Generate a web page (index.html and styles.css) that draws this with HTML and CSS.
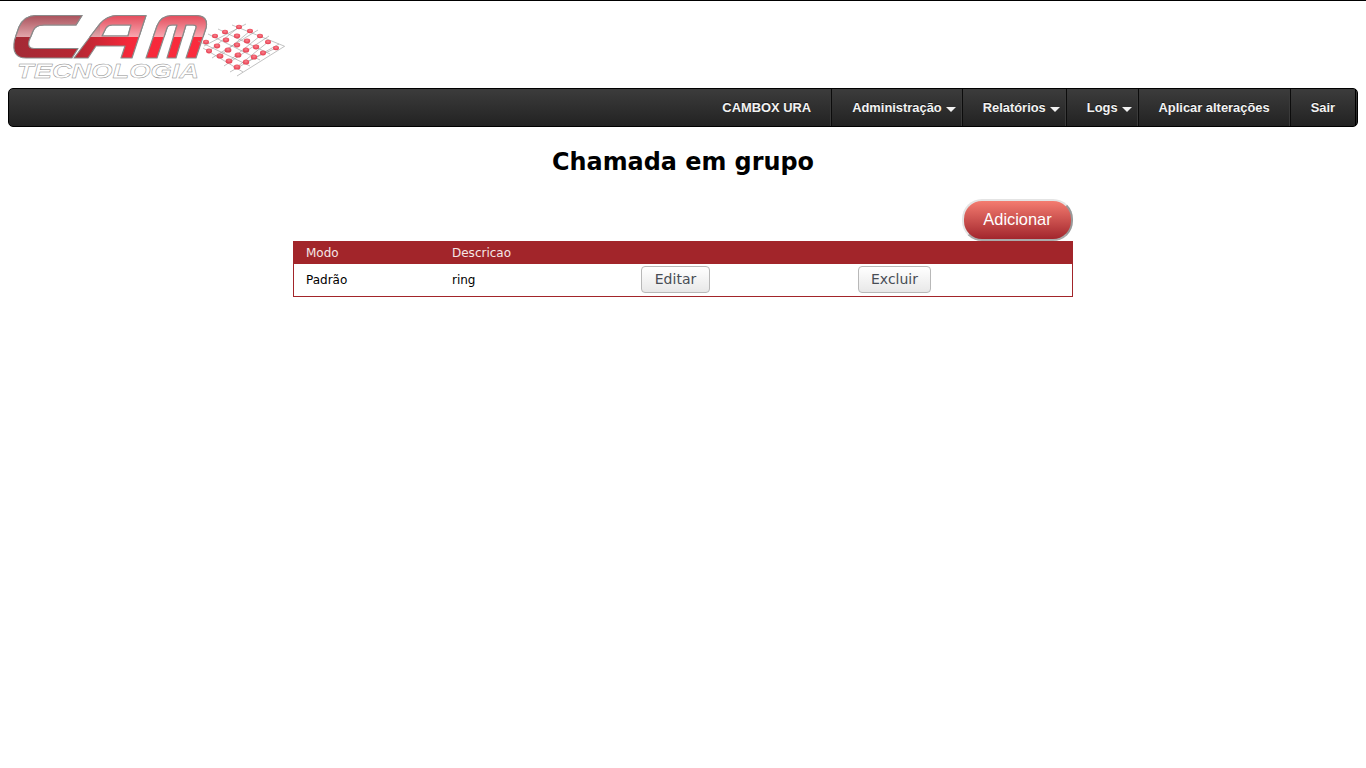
FILE: index.html
```html
<!DOCTYPE html>
<html lang="pt-BR">
<head>
<meta charset="utf-8">
<title>Chamada em grupo</title>
<link rel="stylesheet" href="styles.css">
</head>
<body>
<header class="brand">
<svg class="logo" viewBox="0 1 292 87" role="img" aria-label="CAM Tecnologia">
<defs>
<linearGradient id="lower" gradientUnits="userSpaceOnUse" x1="14" y1="0" x2="205" y2="0">
<stop offset="0" stop-color="#a32a35"/><stop offset=".35" stop-color="#b92733"/><stop offset=".6" stop-color="#f5283a"/><stop offset="1" stop-color="#fb2b3d"/>
</linearGradient>
<linearGradient id="upper" gradientUnits="userSpaceOnUse" x1="0" y1="15" x2="0" y2="37">
<stop offset="0" stop-color="#a8505a"/><stop offset="1" stop-color="#e2a6ab"/>
</linearGradient>
<linearGradient id="upperR" gradientUnits="userSpaceOnUse" x1="0" y1="15" x2="0" y2="37">
<stop offset="0" stop-color="#e34a5a"/><stop offset="1" stop-color="#f8a8b0"/>
</linearGradient>
<clipPath id="shine"><rect x="0" y="0" width="100" height="37"/></clipPath>
<clipPath id="shineR"><rect x="100" y="0" width="120" height="37"/></clipPath>
<radialGradient id="node" cx=".5" cy=".4" r=".6">
<stop offset="0" stop-color="#f8808c"/><stop offset="1" stop-color="#e63a4c"/>
</radialGradient>
<path id="mark" fill-rule="evenodd" d="M82 15.500H36Q24 15.500 19 27L14.500 40Q11 58 26 58H72L78 48.500H34Q27 48.500 29 41L33 31Q35 25 44 25H76ZM74 58L99 25Q106 15.500 118 15.500H146L132 58H121L125 46H96L88 58ZM112 25Q108 25 106 28L102 36H128L131 25ZM146 58L157 26Q161 15.500 172 15.500H195Q209 15.500 206 28L196 58H186L196 28Q197 25 193 25H186L176 58H167L177 25H172Q168 25 167 28L157 58Z"/>
</defs>
<use href="#mark" class="mark-low"/>
<g clip-path="url(#shine)"><use href="#mark" class="mark-hi"/></g>
<g clip-path="url(#shineR)"><use href="#mark" class="mark-hi-r"/></g>
<text x="17" y="78" class="logo-word" textLength="182" lengthAdjust="spacingAndGlyphs">TECNOLOGIA</text>
<path class="net-line" d="M232 25L284 46M218 29L270 54M208 34L260 60M198 41L250 66M203 48L243 72M246 24L204 46M258 30L212 58M269 36L224 66M279 44L230 72M285 46L237 76M239 27L209 51M250 31L220 56M260 36L229 61M268 42L237 67M276 48L246 62"/>
<g class="net-node">
<ellipse cx="239" cy="27" rx="3" ry="2.2"/><ellipse cx="250" cy="31" rx="3" ry="2.2"/><ellipse cx="260" cy="36" rx="3" ry="2.2"/><ellipse cx="268" cy="42" rx="3" ry="2.2"/><ellipse cx="276" cy="48" rx="3" ry="2.2"/>
<ellipse cx="225" cy="32" rx="3" ry="2.2"/><ellipse cx="237" cy="36" rx="3.2" ry="2.4"/><ellipse cx="247" cy="41" rx="3.2" ry="2.4"/><ellipse cx="256" cy="47" rx="3.2" ry="2.4"/><ellipse cx="263" cy="53" rx="3" ry="2.4"/>
<ellipse cx="215" cy="36" rx="3" ry="2.2"/><ellipse cx="226" cy="40" rx="3.2" ry="2.4"/><ellipse cx="237" cy="45" rx="3.2" ry="2.4"/><ellipse cx="246" cy="50" rx="3.2" ry="2.6"/><ellipse cx="254" cy="57" rx="3.2" ry="2.6"/>
<ellipse cx="206" cy="42" rx="3" ry="2.2"/><ellipse cx="217" cy="46" rx="3.2" ry="2.4"/><ellipse cx="228" cy="50" rx="3.4" ry="2.6"/><ellipse cx="238" cy="55" rx="3.4" ry="2.6"/><ellipse cx="246" cy="62" rx="3.2" ry="2.6"/>
<ellipse cx="209" cy="51" rx="3" ry="2.4"/><ellipse cx="220" cy="56" rx="3.4" ry="2.6"/><ellipse cx="229" cy="61" rx="3.4" ry="2.6"/><ellipse cx="237" cy="67" rx="3.4" ry="2.6"/>
</g>
</svg>
</header>
<nav class="navbar">
<ul class="menu">
<li class="menu-item"><a href="#">CAMBOX URA</a></li>
<li class="menu-item has-caret"><a href="#">Administração<span class="caret"></span></a></li>
<li class="menu-item has-caret"><a href="#">Relatórios<span class="caret"></span></a></li>
<li class="menu-item has-caret"><a href="#">Logs<span class="caret"></span></a></li>
<li class="menu-item"><a href="#">Aplicar alterações</a></li>
<li class="menu-item"><a href="#">Sair</a></li>
</ul>
</nav>
<main class="content">
<h1 class="title">Chamada em grupo</h1>
<div class="actions"><button class="btn-add" type="button">Adicionar</button></div>
<table class="grid">
<colgroup><col class="c1"><col class="c2"><col class="c3"><col class="c4"><col></colgroup>
<thead><tr><th>Modo</th><th>Descricao</th><th></th><th></th><th></th></tr></thead>
<tbody><tr><td>Padrão</td><td>ring</td><td class="cell-btn"><button class="btn btn-edit" type="button">Editar</button></td><td class="cell-btn"><button class="btn btn-del" type="button">Excluir</button></td><td></td></tr></tbody>
</table>
</main>
</body>
</html>
```
FILE: styles.css
```css
* { box-sizing: border-box; }
html, body { margin: 0; padding: 0; background: #fff; }
body { border-top: 1px solid #000; min-height: 768px; font-family: "DejaVu Sans", sans-serif; }
.brand { height: 87px; }
.logo { display: block; width: 292px; height: 87px; }
.mark-low, .mark-hi, .mark-hi-r { stroke: #8a8a8a; stroke-width: 1.2; stroke-linejoin: round; }
.mark-low { fill: url(#lower); }
.mark-hi { fill: url(#upper); }
.mark-hi-r { fill: url(#upperR); }
.logo-word { font-family: "Liberation Sans", sans-serif; font-style: italic; font-weight: bold; font-size: 21px; fill: #fff; stroke: #8a8a8a; stroke-width: .4px; }
.net-line { fill: none; stroke: #999; stroke-width: .6; }
.net-node { fill: url(#node); }
.navbar { margin: 0 8px; height: 39px; border: 1px solid #000; border-radius: 5px; background: linear-gradient(#3c3c3c, #222); }
.menu { list-style: none; margin: 0; padding: 0 1px 0 0; height: 100%; display: flex; justify-content: flex-end; }
.menu-item { border-right: 1px solid #0c0c0c; box-shadow: inset -1px 0 0 #3a3a3a; }
.menu-item:last-child { border-right: 1px solid #000; box-shadow: none; }
.menu-item a { display: flex; align-items: center; height: 100%; padding: 0 20px; color: #f2f2f2; font: bold 12.9px "Liberation Sans", sans-serif; text-decoration: none; text-shadow: 0 -1px 0 rgba(0,0,0,.6); }
.has-caret a { padding-right: 6px; }
.caret { display: inline-block; width: 0; height: 0; margin: 3px 0 0 4px; border-left: 5px solid transparent; border-right: 5px solid transparent; border-top: 5px solid #f2f2f2; }
.title { margin: 21px 0 0; text-align: center; font-size: 23.9px; line-height: 28px; font-weight: bold; color: #000; }
.actions { width: 780px; margin: 23px auto 0; display: flex; justify-content: flex-end; }
.btn-add { width: 111px; height: 42px; padding: 0 0 2px; border: 2px solid #e4e4e4; border-right-color: #999; border-bottom-color: #aaa; border-radius: 20px; background: linear-gradient(#f47c70, #a2262d); color: #fff; font: 16.4px "Liberation Sans", sans-serif; }
.grid { width: 780px; margin: 0 auto; border-collapse: separate; border-spacing: 0; table-layout: fixed; border: 1px solid #a2252a; font-size: 12px; }
.c1 { width: 146px; }
.c2 { width: 189px; }
.c3 { width: 217px; }
.c4 { width: 226px; }
.grid th { height: 22px; padding: 0 12px; background: #a2252a; color: #f5e6e6; font-weight: normal; text-align: left; }
.grid td { height: 32px; padding: 0 12px; color: #000; }
.grid .cell-btn { padding-bottom: 2px; }
.btn { display: block; height: 27px; padding: 0; border: 1px solid #b8b8b8; border-radius: 4px; background: linear-gradient(#fff, #e8e8e8); color: #484d55; font: 14px "DejaVu Sans", sans-serif; }
.btn-edit { width: 69px; }
.btn-del { width: 73px; }
```
